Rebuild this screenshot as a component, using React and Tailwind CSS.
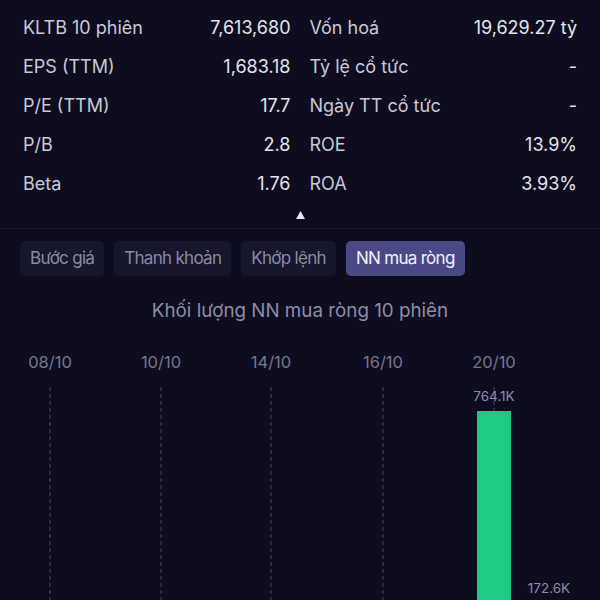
import React from "react";

const leftStats = [
  ["KLTB 10 phiên", "7,613,680"],
  ["EPS (TTM)", "1,683.18"],
  ["P/E (TTM)", "17.7"],
  ["P/B", "2.8"],
  ["Beta", "1.76"],
];

const rightStats = [
  ["Vốn hoá", "19,629.27 tỷ"],
  ["Tỷ lệ cổ tức", "-"],
  ["Ngày TT cổ tức", "-"],
  ["ROE", "13.9%"],
  ["ROA", "3.93%"],
];

const tabs = ["Bước giá", "Thanh khoản", "Khớp lệnh", "NN mua ròng"];
const dates = [
  ["08/10", 50],
  ["10/10", 161],
  ["14/10", 271],
  ["16/10", 383],
  ["20/10", 494],
];

const StatColumn = ({ rows }) => (
  <div className="flex flex-col">
    {rows.map(([label, value]) => (
      <div key={label} className="flex justify-between items-center h-[39px]">
        <span className="text-[#c9c9d6]">{label}</span>
        <span className="text-[#e4e4ec]">{value}</span>
      </div>
    ))}
  </div>
);

const App = () => {
  return (
    <div
      className="w-[600px] h-[600px] overflow-hidden bg-[#0e0d20] text-[18px]"
      style={{ fontFamily: "Inter, 'Noto Sans', sans-serif" }}
    >
      <div className="grid grid-cols-2 gap-x-[19px] pl-[23px] pr-[23px] pt-[8px]">
        <StatColumn rows={leftStats} />
        <StatColumn rows={rightStats} />
      </div>

      <div className="flex justify-center mt-[5px] h-[14px] items-center">
        <svg width="9" height="8" viewBox="0 0 9 8">
          <polygon points="4.5,0 9,8 0,8" fill="#e8e8f0" />
        </svg>
      </div>

      <div className="mt-[6px] h-[1px] bg-[#1d1c33]" />

      <div className="flex gap-[10px] pl-[20px] mt-[12px]">
        {tabs.map((t, i) => (
          <div
            key={t}
            className={`h-[35px] px-[10px] flex items-center rounded-[5px] text-[17px] tracking-[-0.7px] ${
              i === 3 ? "bg-[#4a4985] text-[#f2f2fa]" : "bg-[#16162c] text-[#8b8aa6]"
            }`}
          >
            {t}
          </div>
        ))}
      </div>

      <div className="text-center text-[18.8px] text-[#8d8ca5] mt-[21px]">
        Khối lượng NN mua ròng 10 phiên
      </div>

      <svg width="600" height="300" viewBox="0 0 600 300" className="block mt-[18px]">
        {dates.map(([d, x]) => (
          <g key={d}>
            <text
              x={x}
              y={25}
              textAnchor="middle"
              fontSize="16.5"
              fill="#76758e"
              fontFamily="Inter, sans-serif"
            >
              {d}
            </text>
            <line
              x1={x}
              y1={44}
              x2={x}
              y2={300}
              stroke="#4a4963"
              strokeWidth="1"
              strokeDasharray="4 3"
            />
          </g>
        ))}
        <rect x="477" y="68" width="34" height="240" fill="#1ecb85" />
        <text x="494" y="58" textAnchor="middle" fontSize="13.5" fill="#8d8ca5" fontFamily="Inter, sans-serif">
          764.1K
        </text>
        <text x="549" y="250" textAnchor="middle" fontSize="13.5" fill="#8d8ca5" fontFamily="Inter, sans-serif">
          172.6K
        </text>
      </svg>
    </div>
  );
};

export default App;
